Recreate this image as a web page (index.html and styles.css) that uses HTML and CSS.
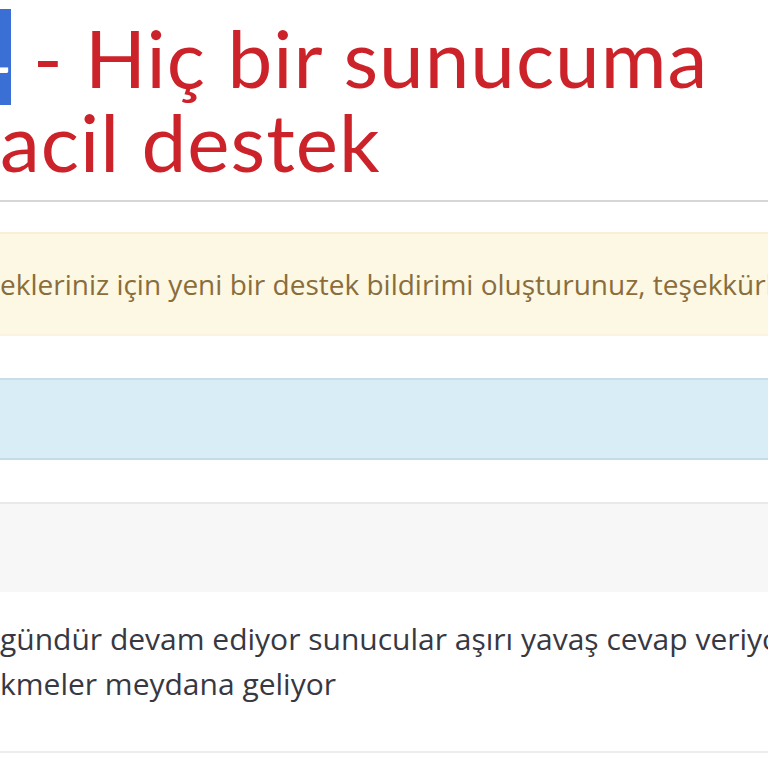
FILE: index.html
```html
<!Doctype html>

<html>
    <head>
        <meta charset="utf-8">
        <title>Destek Bildirimi</title>
        <link rel="stylesheet" href="styles.css">
    </head>
    <body>
        <div class="ticket">
            <h1 class="ticket-title">
                <span class="line first"><span class="sel">4</span> - Hiç bir sunucuma</span>
                <span class="line">acil destek</span>
            </h1>
            <hr class="rule">
            <div class="alert-warning">ekleriniz için yeni bir destek bildirimi oluşturunuz, teşekkürler.</div>
            <div class="panel-info"></div>
            <div class="reply">
                <div class="reply-head"></div>
                <div class="reply-body">
                    <p>gündür devam ediyor sunucular aşırı yavaş cevap veriyor ve<br>kmeler meydana geliyor</p>
                </div>
            </div>
        </div>
    </body>
</html>
```

FILE: styles.css
```css
            html, body{
                margin: 0;
                padding: 0;
                overflow: hidden;
                background: #ffffff;
            }

            .ticket{
                display: flex;
                flex-direction: column;
                white-space: nowrap;
                font-family: "Open Sans", sans-serif;
            }

            .ticket-title{
                margin: 15px 0 0 0;
                font-family: Lato, sans-serif;
                font-weight: 400;
                font-size: 80px;
                line-height: 84px;
                letter-spacing: 1px;
                color: #cc2229;
            }

            .line{
                display: block;
            }

            .first{
                text-indent: -36px;
            }

            .sel{
                background: #3a70d6;
                color: #ffffff;
            }

            .rule{
                margin: 17px 0 0 0;
                border: none;
                border-top: 2px solid #d6d6d6;
            }

            .alert-warning{
                margin-top: 30px;
                padding: 30px 0;
                background: #fcf8e3;
                border-top: 2px solid #faefd6;
                border-bottom: 2px solid #fbf3e0;
                color: #8a6d3b;
                font-size: 28px;
                line-height: 40px;
            }

            .panel-info{
                margin-top: 42px;
                height: 78px;
                background: #d9edf7;
                border-top: 2px solid #c8dde9;
                border-bottom: 2px solid #c4dbe8;
            }

            .reply{
                margin-top: 42px;
                border-bottom: 2px solid #ececec;
            }

            .reply-head{
                height: 88px;
                background: #f7f7f7;
                border-top: 2px solid #e9e9e9;
            }

            .reply-body p{
                margin: 24px 0 45px 0;
                color: #383843;
                font-size: 30px;
                line-height: 45px;
            }
```
